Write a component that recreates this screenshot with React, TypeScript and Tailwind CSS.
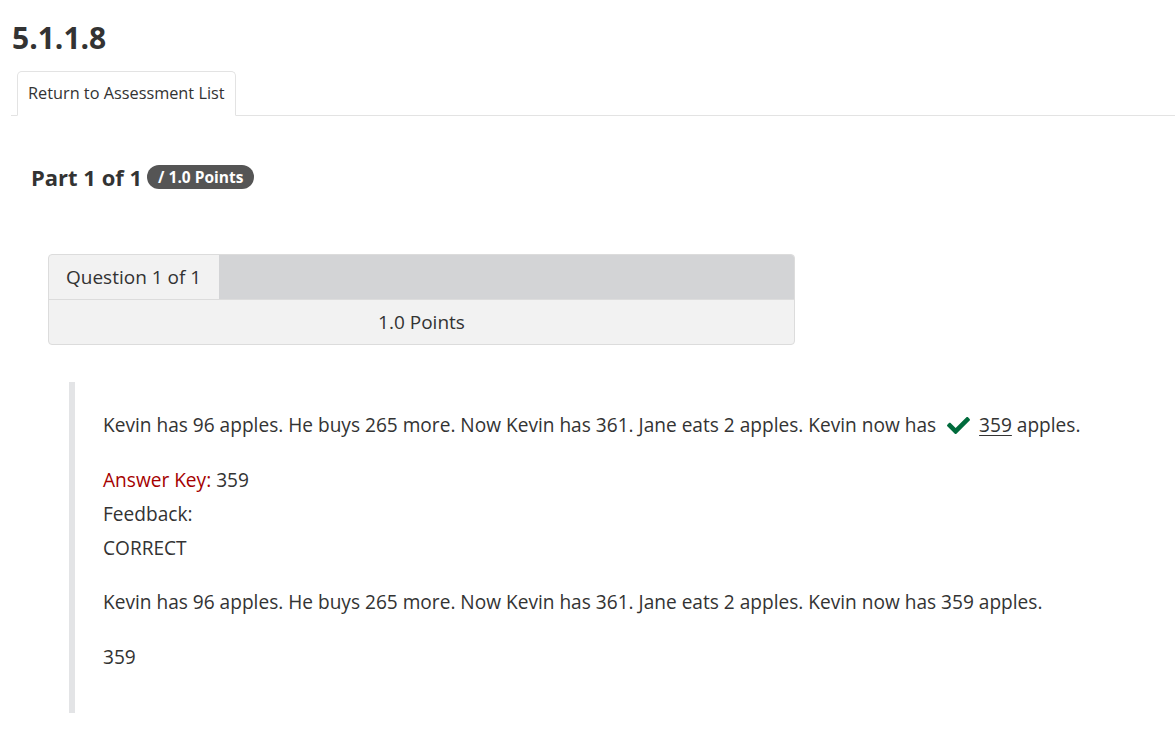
import { FaCheck } from "react-icons/fa"

export default function App() {
  return (
    <main className="min-h-screen bg-white font-['Open_Sans',sans-serif] text-[#333]">
      <h1 className="ml-[12px] pt-[20px] text-[30px] font-bold leading-[36px]">5.1.1.8</h1>

      <nav className="ml-[11px] mt-[15px] flex border-b border-[#e3e3e3] pl-[6px]">
        <div className="-mb-px flex h-[45px] items-center rounded-t-[5px] border border-b-white border-[#e3e3e3] bg-white px-[10px] text-[16.3px]">
          Return to Assessment List
        </div>
      </nav>

      <div className="ml-[31px] mt-[46px] flex items-center gap-[5px]">
        <h2 className="text-[22px] font-bold leading-[30px]">Part 1 of 1</h2>
        <span className="flex h-[24px] items-center rounded-full bg-[#555] px-[11px] pt-px text-[15.5px] font-bold text-white">
          / 1.0 Points
        </span>
      </div>

      <section className="ml-[48px] mt-[62px] w-[747px] overflow-hidden rounded-[4px] border border-[#dcdcdc] bg-[#f2f2f2]">
        <div className="flex h-[45px] border-b border-[#dcdcdc]">
          <div className="flex w-[170px] items-center pl-[17px] text-[19px]">Question 1 of 1</div>
          <div className="flex-1 bg-[#d3d4d6]" />
        </div>
        <div className="flex h-[44px] items-center justify-center text-[19px]">1.0 Points</div>
      </section>

      <blockquote className="ml-[69px] mt-[37px] border-l-[6px] border-[#e3e4e6] pb-[39px] pl-[28px] pt-[26px] text-[19.1px] leading-[34px]">
        <p className="mb-[21px]">
          Kevin has 96 apples. He buys 265 more. Now Kevin has 361. Jane eats 2 apples. Kevin now has{" "}
          <FaCheck className="ml-[6px] mr-[9px] inline-block h-[23px] w-[23px] align-[-5px] text-[#006b3c]" />
          <span className="underline underline-offset-[3px]">359</span> apples.
        </p>
        <div className="mb-[20px]">
          <div>
            <span className="text-[#a50000]">Answer Key:</span> 359
          </div>
          <div>Feedback:</div>
          <div>CORRECT</div>
        </div>
        <p className="mb-[21px]">
          Kevin has 96 apples. He buys 265 more. Now Kevin has 361. Jane eats 2 apples. Kevin now has 359 apples.
        </p>
        <p>359</p>
      </blockquote>
    </main>
  )
}
